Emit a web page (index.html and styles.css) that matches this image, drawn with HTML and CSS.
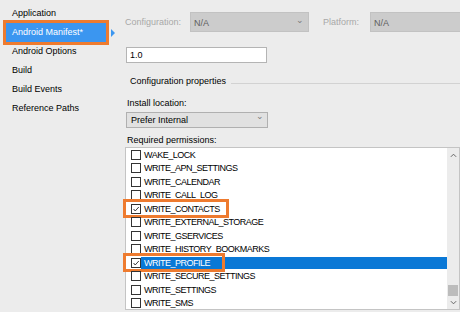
FILE: index.html
```html
<!DOCTYPE html>
<html lang="en">
<head>
  <meta charset="UTF-8">
  <title>Android Manifest</title>
  <link rel="stylesheet" href="styles.css">
</head>
<body>
  <div class="window">
    <nav class="sidebar">
      <div class="nav-item">Application</div>
      <div class="nav-item active">Android Manifest*</div>
      <div class="nav-item">Android Options</div>
      <div class="nav-item">Build</div>
      <div class="nav-item">Build Events</div>
      <div class="nav-item">Reference Paths</div>
    </nav>

    <main class="panel">
      <div class="toolbar">
        <span class="tb-label">Configuration:</span>
        <div class="tb-combo config">N/A <span class="chev">&#8964;</span></div>
        <span class="tb-label platform">Platform:</span>
        <div class="tb-combo plat">N/A</div>
      </div>

      <div class="textbox">1.0</div>

      <div class="group-title"><span>Configuration properties</span><span class="group-line"></span></div>

      <div class="field-label install">Install location:</div>
      <div class="combo">Prefer Internal <span class="chev">&#8964;</span></div>

      <div class="field-label perms">Required permissions:</div>
      <div class="listbox">
        <ul class="perm-list">
          <li class="row"><span class="check"></span><span class="name">WAKE_LOCK</span></li>
          <li class="row"><span class="check"></span><span class="name">WRITE_APN_SETTINGS</span></li>
          <li class="row"><span class="check"></span><span class="name">WRITE_CALENDAR</span></li>
          <li class="row"><span class="check"></span><span class="name">WRITE_CALL_LOG</span></li>
          <li class="row">
            <span class="check checked"><svg viewBox="0 0 10 10"><polyline points="2,5 4,7.5 8.5,2.5"/></svg></span><span class="name">WRITE_CONTACTS</span>
            <span class="callout contacts"></span>
          </li>
          <li class="row"><span class="check"></span><span class="name">WRITE_EXTERNAL_STORAGE</span></li>
          <li class="row"><span class="check"></span><span class="name">WRITE_GSERVICES</span></li>
          <li class="row"><span class="check"></span><span class="name">WRITE_HISTORY_BOOKMARKS</span></li>
          <li class="row selected">
            <span class="check checked"><svg viewBox="0 0 10 10"><polyline points="2,5 4,7.5 8.5,2.5"/></svg></span><span class="name">WRITE_PROFILE</span>
            <span class="callout profile"></span>
          </li>
          <li class="row"><span class="check"></span><span class="name">WRITE_SECURE_SETTINGS</span></li>
          <li class="row"><span class="check"></span><span class="name">WRITE_SETTINGS</span></li>
          <li class="row"><span class="check"></span><span class="name">WRITE_SMS</span></li>
        </ul>
        <div class="scrollbar">
          <svg class="arrow" viewBox="0 0 8 5"><polyline points="1,4 4,1 7,4"/></svg>
          <div class="track"><div class="thumb"></div></div>
          <svg class="arrow" viewBox="0 0 8 5"><polyline points="1,1 4,4 7,1"/></svg>
        </div>
      </div>
    </main>
  </div>
</body>
</html>
```

FILE: styles.css
```css
html, body {
  margin: 0;
  padding: 0;
}
body {
  width: 460px;
  height: 312px;
  overflow: hidden;
  background: #ececec;
  font-family: "Liberation Sans", Arial, sans-serif;
  font-size: 9px;
  color: #000000;
}
.window {
  display: flex;
  height: 312px;
}

/* left navigation */
.sidebar {
  width: 120px;
  flex: none;
  padding-top: 4px;
}
.nav-item {
  position: relative;
  margin-left: 6px;
  width: 100px;
  height: 19px;
  line-height: 19px;
  padding-left: 6px;
  box-sizing: border-box;
}
.nav-item.active {
  background: #3b96f0;
  color: #ffffff;
  outline: 3px solid #ee7b2f;
}
.nav-item.active::after {
  content: "";
  position: absolute;
  right: -9px;
  top: 6px;
  border-left: 4px solid #3b96f0;
  border-top: 4px solid transparent;
  border-bottom: 4px solid transparent;
}

/* right panel */
.panel {
  flex: 1;
  padding-left: 5px;
  display: flex;
  flex-direction: column;
  align-items: flex-start;
}
.toolbar {
  display: flex;
  align-items: center;
  margin-top: 12px;
  height: 20px;
  color: #a8a8a8;
}
.tb-label {
  width: 65px;
}
.tb-label.platform {
  margin-left: 14px;
  width: 47px;
}
.tb-combo {
  position: relative;
  height: 20px;
  line-height: 20px;
  box-sizing: border-box;
  background: #cccccc;
  border: 1px solid #c2c2c2;
  color: #5e5e5e;
  padding-left: 3px;
}
.tb-combo.config {
  width: 119px;
}
.tb-combo.plat {
  width: 100px;
}
.chev {
  position: absolute;
  right: 4px;
  top: -3px;
  color: #7a7a7a;
  font-size: 9px;
}

.textbox {
  margin-top: 15px;
  margin-left: 1px;
  width: 141px;
  height: 16px;
  line-height: 14px;
  box-sizing: border-box;
  background: #ffffff;
  border: 1px solid #b4b4b4;
  padding-left: 3px;
}
.group-title {
  margin-top: 12px;
  height: 13px;
  line-height: 13px;
  width: 100%;
  display: flex;
  align-items: center;
  padding-left: 5px;
  box-sizing: border-box;
}
.group-line {
  flex: 1;
  margin-left: 5px;
  margin-top: 3px;
  height: 1px;
  background: #d2d2d2;
}
.field-label {
  height: 12px;
  line-height: 12px;
  margin-left: 2px;
}
.field-label.install {
  margin-top: 9px;
}
.field-label.perms {
  margin-top: 6px;
}
.combo {
  position: relative;
  margin-top: 3px;
  margin-left: 1px;
  width: 142px;
  height: 16px;
  line-height: 14px;
  box-sizing: border-box;
  background: #e1e1e1;
  border: 1px solid #b0b0b0;
  padding-left: 4px;
}
.combo .chev {
  top: -4px;
  right: 3px;
}

/* permissions list */
.listbox {
  margin-top: 1px;
  width: 335px;
  height: 163px;
  box-sizing: border-box;
  border: 1px solid #c4c4c4;
  background: #ffffff;
  display: flex;
}
.perm-list {
  list-style: none;
  margin: 0;
  padding: 0;
  flex: 1;
}
.row {
  position: relative;
  display: flex;
  align-items: center;
  height: 13.5px;
}
.check {
  flex: none;
  width: 10px;
  height: 10px;
  box-sizing: border-box;
  border: 1px solid #333333;
  background: #ffffff;
  margin-left: 5px;
}
.check svg {
  display: block;
  width: 8px;
  height: 8px;
  fill: none;
  stroke: #333333;
  stroke-width: 1.2;
}
.name {
  flex: 1;
  padding-left: 3px;
  height: 12px;
  line-height: 12px;
  letter-spacing: -0.5px;
}
.row.selected .name {
  background: #0a78d6;
  color: #ffffff;
}
.callout {
  position: absolute;
  top: -3px;
  left: -3px;
  height: 13px;
  border: 3px solid #ee7b2f;
}
.callout.contacts {
  width: 100px;
}
.callout.profile {
  width: 96px;
}

.scrollbar {
  width: 12px;
  flex: none;
  background: #ececec;
  display: flex;
  flex-direction: column;
  align-items: center;
  padding: 5px 0 4px;
  box-sizing: border-box;
}
.arrow {
  width: 7px;
  height: 5px;
  fill: none;
  stroke: #606060;
  stroke-width: 1.1;
}
.track {
  flex: 1;
  width: 100%;
  display: flex;
  flex-direction: column;
  justify-content: flex-end;
  padding-bottom: 4px;
}
.thumb {
  margin: 0 auto;
  width: 10px;
  height: 11px;
  background: #bcbcbc;
}
```
